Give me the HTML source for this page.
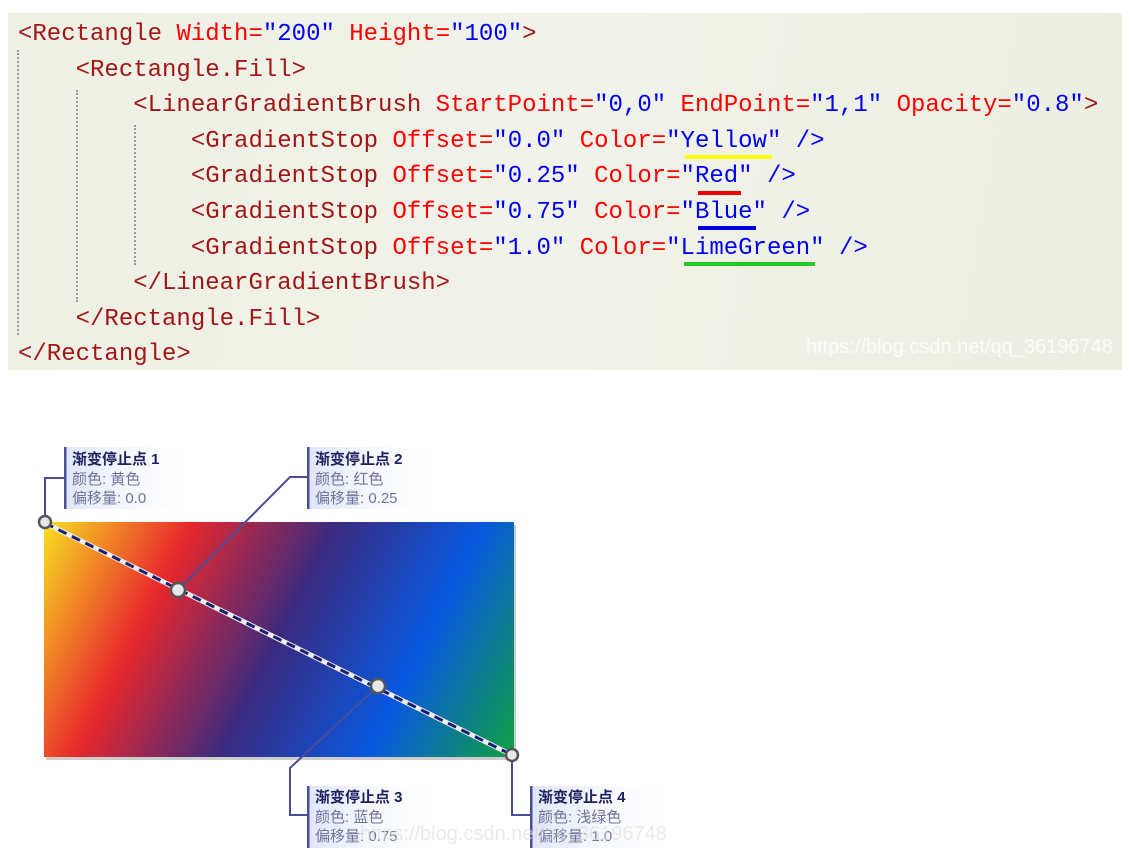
<!DOCTYPE html>
<html><head><meta charset="utf-8"><style>
body{margin:0;width:1133px;height:861px;background:#fff;position:relative;overflow:hidden}
#code{position:absolute;left:8px;top:13px;width:1114px;height:357px;background:linear-gradient(100deg,#eef0e5,#f1f3ea 50%,#eceee2)}
pre{position:absolute;left:18px;top:17px;margin:0;font-family:"Liberation Mono",monospace;font-size:24px;line-height:35.6px;color:#a31515}
.a{color:#f00}.v{color:#0000f0}
.g{position:absolute;border-left:2px dotted #999;width:0}
.u{position:absolute;height:4px}
.wm{position:absolute;font-family:"Liberation Sans",sans-serif;color:#fff;opacity:.8;font-size:20px}
</style></head><body>
<div id="code"></div>
<div class="g" style="left:17px;top:50px;height:285px"></div>
<div class="g" style="left:76px;top:90px;height:212px"></div>
<div class="g" style="left:134px;top:125px;height:140px"></div>
<pre>&lt;Rectangle <span class="a">Width=</span><span class="v">"200"</span> <span class="a">Height=</span><span class="v">"100"</span>&gt;
    &lt;Rectangle.Fill&gt;
        &lt;LinearGradientBrush <span class="a">StartPoint=</span><span class="v">"0,0"</span> <span class="a">EndPoint=</span><span class="v">"1,1"</span> <span class="a">Opacity=</span><span class="v">"0.8"</span>&gt;
            &lt;GradientStop <span class="a">Offset=</span><span class="v">"0.0"</span> <span class="a">Color=</span><span class="v">"Yellow"</span> <span class="v">/&gt;</span>
            &lt;GradientStop <span class="a">Offset=</span><span class="v">"0.25"</span> <span class="a">Color=</span><span class="v">"Red"</span> <span class="v">/&gt;</span>
            &lt;GradientStop <span class="a">Offset=</span><span class="v">"0.75"</span> <span class="a">Color=</span><span class="v">"Blue"</span> <span class="v">/&gt;</span>
            &lt;GradientStop <span class="a">Offset=</span><span class="v">"1.0"</span> <span class="a">Color=</span><span class="v">"LimeGreen"</span> <span class="v">/&gt;</span>
        &lt;/LinearGradientBrush&gt;
    &lt;/Rectangle.Fill&gt;
&lt;/Rectangle&gt;</pre>
<div class="u" style="left:685px;top:155px;width:87px;background:#ff0"></div>
<div class="u" style="left:698px;top:191px;width:43px;background:#e00"></div>
<div class="u" style="left:698px;top:226px;width:58px;background:#00d"></div>
<div class="u" style="left:684px;top:262px;width:131px;background:#2c2"></div>
<div class="wm" style="left:806px;top:336px">https://blog.csdn.net/qq_36196748</div>
<svg style="position:absolute;left:0;top:0" width="1133" height="861" font-family="'Liberation Sans','Noto Sans CJK SC',sans-serif">
<defs>
<linearGradient id="gr" x1="44" y1="522" x2="514" y2="757" gradientUnits="userSpaceOnUse">
<stop offset="0" stop-color="#f8e020"/><stop offset=".25" stop-color="#e8282c"/><stop offset=".5" stop-color="#3a2a80"/><stop offset=".75" stop-color="#0858e0"/><stop offset="1" stop-color="#10a040"/>
</linearGradient>
<linearGradient id="lb" x1="0" x2="1"><stop offset="0" stop-color="#dde5f8"/><stop offset="1" stop-color="#fff" stop-opacity="0"/></linearGradient>
</defs>
<rect x="46" y="525" width="470" height="235" fill="#ccc"/>
<rect x="44" y="522" width="470" height="235" fill="url(#gr)"/>
<line x1="45" y1="523" x2="512" y2="755" stroke="#eee" stroke-width="5"/>
<line x1="45" y1="523" x2="512" y2="755" stroke="#1a1f70" stroke-width="3" stroke-dasharray="9,6"/>
<g fill="none" stroke="#4a4e98" stroke-width="2">
<polyline points="45,520 45,478 64,478"/>
<polyline points="178,590 290,477 307,477"/>
<polyline points="378,686 290,768 290,815 307,815"/>
<polyline points="512,755 512,815 530,815"/>
</g>
<g>
<rect x="64" y="447" width="140" height="62" fill="url(#lb)"/><rect x="64" y="447" width="2.5" height="62" fill="#4a4e98"/>
<rect x="307" y="447" width="140" height="62" fill="url(#lb)"/><rect x="307" y="447" width="2.5" height="62" fill="#4a4e98"/>
<rect x="307" y="786" width="140" height="62" fill="url(#lb)"/><rect x="307" y="786" width="2.5" height="62" fill="#4a4e98"/>
<rect x="530" y="786" width="150" height="62" fill="url(#lb)"/><rect x="530" y="786" width="2.5" height="62" fill="#4a4e98"/>
</g>
<g font-size="15">
<text x="72" y="464" font-weight="bold" fill="#1e2060">渐变停止点 1</text><text x="72" y="484" fill="#70749a">颜色: 黄色</text><text x="72" y="503" fill="#70749a">偏移量: 0.0</text>
<text x="315" y="464" font-weight="bold" fill="#1e2060">渐变停止点 2</text><text x="315" y="484" fill="#70749a">颜色: 红色</text><text x="315" y="503" fill="#70749a">偏移量: 0.25</text>
<text x="315" y="802" font-weight="bold" fill="#1e2060">渐变停止点 3</text><text x="315" y="822" fill="#70749a">颜色: 蓝色</text><text x="315" y="841" fill="#70749a">偏移量: 0.75</text>
<text x="538" y="802" font-weight="bold" fill="#1e2060">渐变停止点 4</text><text x="538" y="822" fill="#70749a">颜色: 浅绿色</text><text x="538" y="841" fill="#70749a">偏移量: 1.0</text>
</g>
<g fill="#e8e8e8" stroke="#555" stroke-width="2.5">
<circle cx="45" cy="522" r="6"/><circle cx="178" cy="590" r="7"/><circle cx="378" cy="686" r="7"/><circle cx="512" cy="755" r="6"/>
</g>
<text x="360" y="840" font-size="20" fill="#ddd" opacity=".6">https://blog.csdn.net/qq_36196748</text>
</svg>
</body></html>
